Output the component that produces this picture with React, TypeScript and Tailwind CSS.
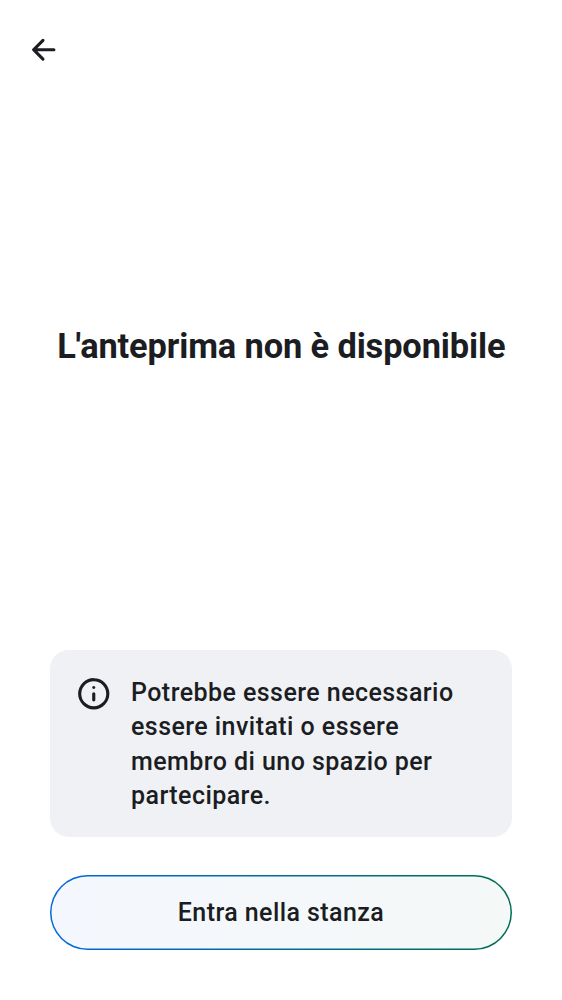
export default function App() {
  return (
    <div className="flex h-[1000px] w-[562px] flex-col bg-white font-['Roboto',sans-serif] text-[#1b1d22]">
      <header className="flex h-[100px] shrink-0 items-center pl-[25px]">
        <button aria-label="Indietro" className="mb-[1px] size-[37.5px]">
          <svg viewBox="0 0 24 24" className="size-[37.5px]" fill="currentColor">
            <path d="m12.207 5.293a1 1 0 0 1 0 1.414L7.914 11H18.5a1 1 0 1 1 0 2H7.914l4.293 4.293a1 1 0 0 1-1.414 1.414l-6-6a1 1 0 0 1 0-1.414l6-6a1 1 0 0 1 1.414 0" />
          </svg>
        </button>
      </header>
      <main className="flex h-[550px] shrink-0 flex-col items-center pt-[224px]">
        <h1 className="ml-[0.5px] whitespace-nowrap text-[34.4px] leading-[44px] font-bold tracking-[-0.13px]">L'anteprima non è disponibile</h1>
      </main>
      <footer className="flex flex-col gap-[38px] px-[50px]">
        <div className="flex h-[187px] rounded-[19px] bg-[#f0f1f5] pt-[25px] pl-[25px]">
          <svg viewBox="0 0 24 24" className="size-[37.5px] shrink-0" fill="currentColor">
            <path d="M12 17q.424 0 .713-.288A.97.97 0 0 0 13 16v-4a.97.97 0 0 0-.287-.713A.97.97 0 0 0 12 11a.97.97 0 0 0-.713.287A.97.97 0 0 0 11 12v4q0 .424.287.712.288.288.713.288m0-8q.424 0 .713-.287A.97.97 0 0 0 13 8a.97.97 0 0 0-.287-.713A.97.97 0 0 0 12 7a.97.97 0 0 0-.713.287A.97.97 0 0 0 11 8q0 .424.287.713Q11.576 9 12 9m0 13a9.7 9.7 0 0 1-3.9-.788 10.1 10.1 0 0 1-3.175-2.137q-1.35-1.35-2.137-3.175A9.7 9.7 0 0 1 2 12q0-2.075.788-3.9a10.1 10.1 0 0 1 2.137-3.175q1.35-1.35 3.175-2.137A9.7 9.7 0 0 1 12 2q2.075 0 3.9.788a10.1 10.1 0 0 1 3.175 2.137q1.35 1.35 2.137 3.175A9.7 9.7 0 0 1 22 12a9.7 9.7 0 0 1-.788 3.9 10.1 10.1 0 0 1-2.137 3.175q-1.35 1.35-3.175 2.137A9.7 9.7 0 0 1 12 22m0-2q3.35 0 5.675-2.325T20 12t-2.325-5.675T12 4 6.325 6.325 4 12t2.325 5.675T12 20" />
          </svg>
          <p className="mt-[1px] ml-[18.5px] text-[25px] leading-[34.4px] font-medium tracking-[0.44px]">
            Potrebbe essere necessario<br />essere invitati o essere<br />membro di uno spazio per<br />partecipare.
          </p>
        </div>
        <button className="h-[75px] rounded-full bg-linear-to-r from-[#0467dd] to-[#006b52]">
          <span className="flex h-full items-center justify-center bg-linear-to-r from-[#f4f8fe] to-[#f4f8f7] text-[25px] font-medium tracking-[0.42px] [clip-path:inset(1.5px_round_36px)]">Entra nella stanza</span>
        </button>
      </footer>
    </div>
  );
}
